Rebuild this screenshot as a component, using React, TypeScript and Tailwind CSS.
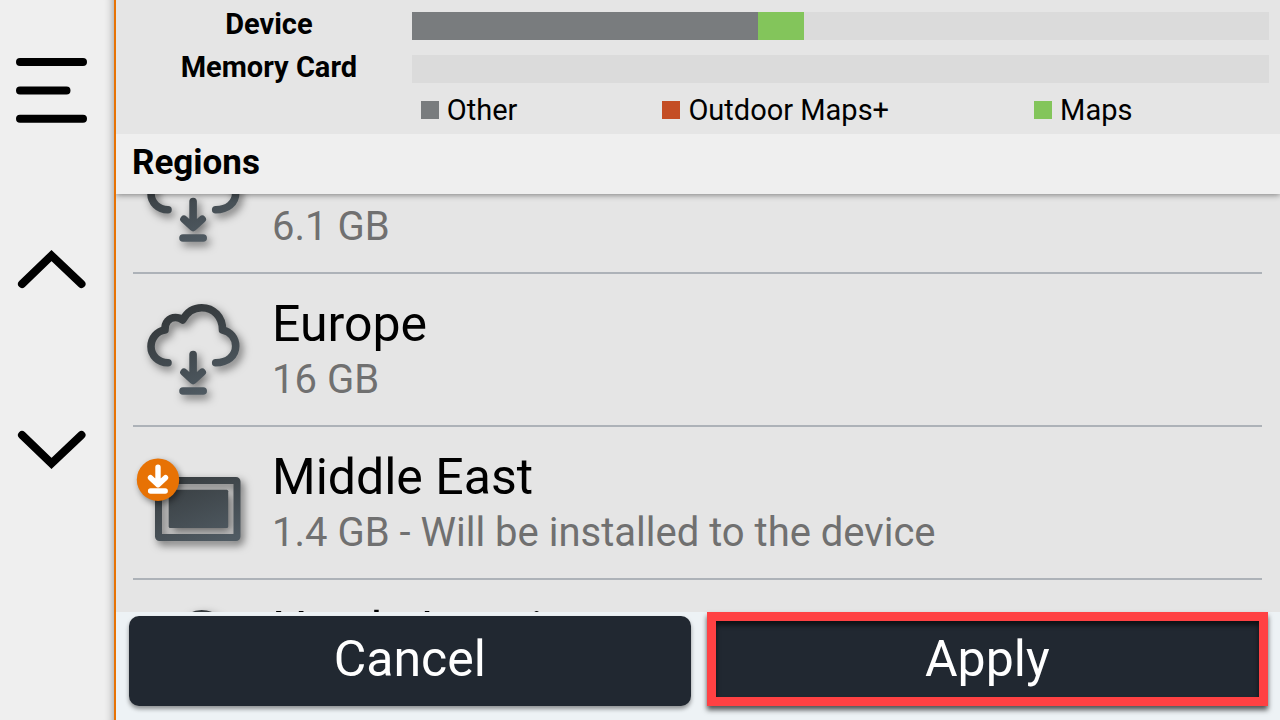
import { useLayoutEffect, useRef } from "react";

interface IRegion {
  name: string;
  detail: string;
  installing?: boolean;
}

const regions: IRegion[] = [
  { name: "Asia", detail: "6.1 GB" },
  { name: "Europe", detail: "16 GB" },
  {
    name: "Middle East",
    detail: "1.4 GB - Will be installed to the device",
    installing: true,
  },
  { name: "North America", detail: "12 GB" },
];

const storage = [
  {
    name: "Device",
    parts: [
      { color: "bg-[#797c7e]", percent: 40.4 },
      { color: "bg-[#83c55b]", percent: 5.35 },
    ],
  },
  { name: "Memory Card", parts: [] },
];

const legend = [
  { label: "Other", color: "bg-[#797c7e]" },
  { label: "Outdoor Maps+", color: "bg-[#c44d24]" },
  { label: "Maps", color: "bg-[#83c55b]" },
];

function IconGradient() {
  return (
    <svg width="0" height="0" className="absolute" aria-hidden="true">
      <defs>
        <linearGradient
          id="steel"
          gradientUnits="userSpaceOnUse"
          x1="40"
          y1="15"
          x2="75"
          y2="105"
        >
          <stop offset="0" stopColor="#323638" />
          <stop offset="1" stopColor="#505b63" />
        </linearGradient>
      </defs>
    </svg>
  );
}

function CloudIcon() {
  return (
    <svg
      viewBox="0 0 120 120"
      className="size-[120px] shrink-0 drop-shadow-[3px_4px_4px_rgba(0,0,0,0.5)]"
      fill="none"
      stroke="url(#steel)"
      strokeWidth="7.6"
      strokeLinecap="round"
      strokeLinejoin="round"
      aria-hidden="true"
    >
      <path d="M35 72.7C25 72.5 18 65.5 18 56.5C18 48 24 41 32 40C31.5 32.5 36 27.5 42.5 27.5C45.5 27.5 47.8 28.5 49.7 30C54 22 60.5 17.7 68.7 17.7C80.500 17.7 89.7 27 89.5 40C97.5 41.5 102.7 48 102.7 56C102.7 66 94.5 72.7 82.7 72.7" />
      <path d="M60.1 64.5V90M51 82.3L60.1 90.5L69.2 82.3M50 101H70.2" />
    </svg>
  );
}

function InstallIcon() {
  return (
    <svg
      viewBox="0 0 120 120"
      className="size-[120px] shrink-0 overflow-visible"
      fill="none"
      aria-hidden="true"
    >
      <g className="drop-shadow-[3px_4px_4px_rgba(0,0,0,0.55)]">
        <rect
          x="25.5"
          y="37.5"
          width="78.5"
          height="57"
          rx="1"
          stroke="url(#steel)"
          strokeWidth="7"
          strokeLinejoin="round"
        />
        <rect
          x="35.7"
          y="46.7"
          width="59.5"
          height="38.3"
          rx="1.5"
          fill="url(#steel)"
        />
      </g>
      <g className="drop-shadow-[2px_3px_3px_rgba(0,0,0,0.45)]">
        <circle cx="25" cy="36.7" r="21.2" fill="#e77204" />
      </g>
      <path
        d="M25 24.2V41M17.5 34.7L25 41.7L32.5 34.7M17.6 48H32.2"
        stroke="#fff"
        strokeWidth="5.4"
        strokeLinecap="round"
        strokeLinejoin="round"
      />
    </svg>
  );
}

function SideButton({
  label,
  path,
  onClick,
}: {
  label: string;
  path: string;
  onClick?: () => void;
}) {
  return (
    <button type="button" aria-label={label} onClick={onClick}>
      <svg
        viewBox="0 0 72 72"
        className="size-[72px]"
        fill="none"
        stroke="#000"
        strokeWidth="8"
        strokeLinecap="round"
        aria-hidden="true"
      >
        <path d={path} />
      </svg>
    </button>
  );
}

function StorageHeader() {
  return (
    <header className="pl-[10px] pr-[11px] py-3 flex flex-col gap-[15px] text-[29px]">
      {storage.map((item) => (
        <div key={item.name} className="grid grid-cols-4 h-7">
          <div className="leading-6 font-bold text-center whitespace-nowrap">
            {item.name}
          </div>
          <div className="col-span-3 flex bg-[#dbdbdb]">
            {item.parts.map((part) => (
              <div
                key={part.color}
                className={part.color}
                style={{ width: `${part.percent}%` }}
              />
            ))}
          </div>
        </div>
      ))}
      <div className="grid grid-cols-4">
        <ul className="col-start-2 col-span-3 pl-[9px] flex gap-[145px] leading-6">
          {legend.map((item) => (
            <li
              key={item.label}
              className="flex items-center gap-2 whitespace-nowrap"
            >
              <span className={`size-[18px] ${item.color}`} />
              {item.label}
            </li>
          ))}
        </ul>
      </div>
    </header>
  );
}

function RegionRow({ region }: { region: IRegion }) {
  return (
    <li className="ml-[17px] mr-[18px] h-[153px] flex items-center gap-[19px] border-b-2 border-[#adb2b8]">
      {region.installing ? <InstallIcon /> : <CloudIcon />}
      <div className="whitespace-nowrap">
        <h3 className="text-[50px] leading-[60px]">{region.name}</h3>
        <p className="text-[40px] leading-[52px] text-[#707070]">
          {region.detail}
        </p>
      </div>
    </li>
  );
}

function App() {
  const listRef = useRef<HTMLUListElement>(null);

  // open the list half a row down
  useLayoutEffect(() => {
    if (listRef.current) listRef.current.scrollTop = 73;
  }, []);

  const scroll = (rows: number) => {
    listRef.current?.scrollBy({ top: rows * 153, behavior: "smooth" });
  };

  return (
    <div className="flex h-screen overflow-hidden bg-[#e5e5e5] font-[Roboto,sans-serif] text-black">
      <IconGradient />
      <nav className="w-[116px] shrink-0 flex flex-col items-start gap-[108px] pl-4 pt-[54px] bg-[#efefef] border-r-2 border-[#e77204] shadow-[inset_-10px_0_10px_-10px_rgba(0,0,0,0.4)]">
        <SideButton label="Menu" path="M4 8H67M4 36.4H50.5M4 64.7H67" />
        <SideButton
          label="Scroll up"
          path="M6 50L35.5 21.5L65.5 50"
          onClick={() => scroll(-1)}
        />
        <SideButton
          label="Scroll down"
          path="M6 21L35.5 49.5L65.5 21"
          onClick={() => scroll(1)}
        />
      </nav>

      <main className="flex-1 min-w-0 flex flex-col">
        <StorageHeader />
        <h2 className="relative z-10 h-[60px] shrink-0 flex items-center pl-4 pb-0.5 bg-[#efefef] text-[35px] font-bold shadow-[0_1px_6px_rgba(0,0,0,0.45)] [clip-path:inset(0_0_-12px_0)]">
          Regions
        </h2>
        <ul
          ref={listRef}
          className="flex-1 min-h-0 overflow-y-auto [scrollbar-width:none]"
        >
          {regions.map((region) => (
            <RegionRow key={region.name} region={region} />
          ))}
        </ul>
        <footer className="shrink-0 grid grid-cols-2 items-end gap-4 pl-[13px] pr-3 pb-[14px] bg-[#edf2f5] text-[50px] text-white">
          <button
            type="button"
            className="h-[90px] pb-1 rounded-[10px] bg-[#212831] shadow-[0_3px_4px_rgba(0,0,0,0.4)]"
          >
            Cancel
          </button>
          <button
            type="button"
            className="h-[94px] flex items-center justify-center border-[9px] border-[#ff4143] bg-[#212831] shadow-[0_4px_5px_rgba(0,0,0,0.65),inset_0_4px_5px_rgba(0,0,0,0.6)]"
          >
            Apply
          </button>
        </footer>
      </main>
    </div>
  );
}

export default App;
